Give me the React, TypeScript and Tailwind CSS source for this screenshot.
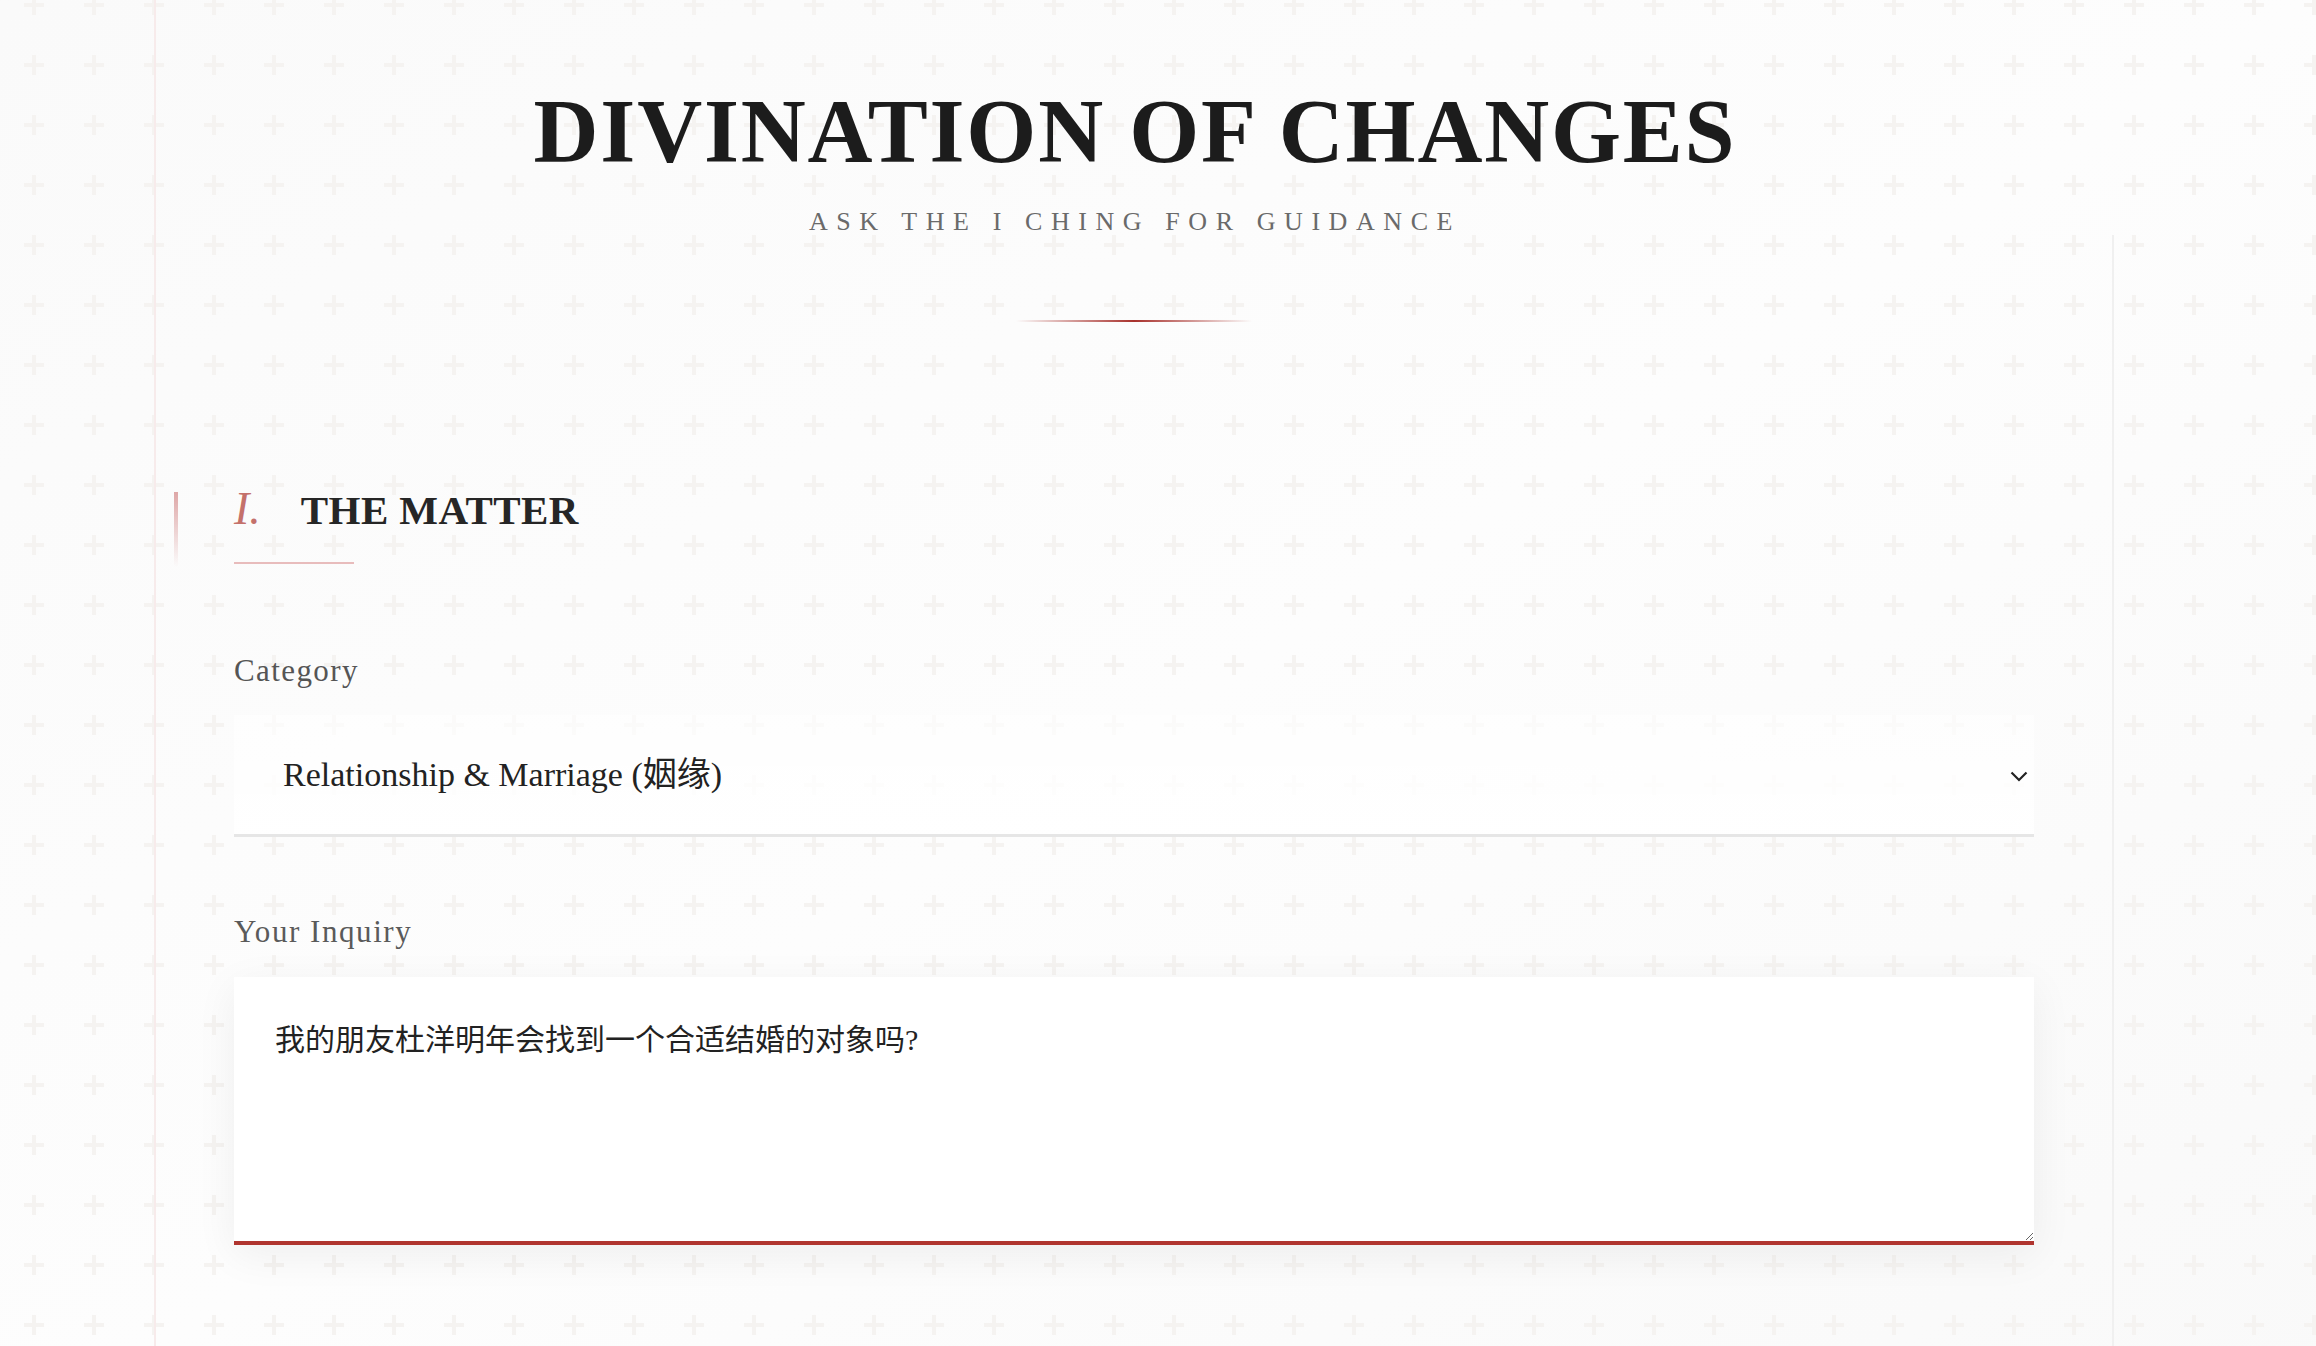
import { ChangeEvent, useState } from "react";

const serif = "font-['Liberation_Serif','Noto_Sans_CJK_SC',serif]";

// light plus-sign grid behind everything
function CrossPattern() {
  return (
    <svg className="pointer-events-none absolute inset-0 h-full w-full" aria-hidden="true">
      <defs>
        <pattern id="cross" x="4" y="-25" width="60" height="60" patternUnits="userSpaceOnUse">
          <rect x="20" y="28" width="20" height="4" fill="#f5f3f1" />
          <rect x="28" y="20" width="4" height="20" fill="#f5f3f1" />
        </pattern>
      </defs>
      <rect width="100%" height="100%" fill="url(#cross)" />
    </svg>
  );
}

const categories = [
  "Relationship & Marriage (姻缘)",
  "Career & Work (事业)",
  "Wealth & Fortune (财运)",
  "Health (健康)",
  "Study & Exams (学业)",
];

export default function App() {
  const [category, setCategory] = useState(categories[0]);
  const [inquiry, setInquiry] = useState("我的朋友杜洋明年会找到一个合适结婚的对象吗?");

  return (
    <div className={`relative min-h-screen overflow-hidden bg-gradient-to-br from-[#fafafa] via-[#fdfdfd] to-[#f9f9f9] ${serif}`}>
      <CrossPattern />

      <div className="relative ml-[154px] w-[1960px] min-h-screen border-l-2 border-[#f7ebeb]">
        {/* header */}
        <header className="flex flex-col items-center pt-[87px]">
          <h1 className="text-[90px] font-bold leading-none tracking-[0.02em] text-[#1c1c1c]">
            DIVINATION OF CHANGES
          </h1>
          <p className="mt-[32px] text-[26px] leading-none tracking-[0.33em] text-[#6a6a6a]">
            ASK THE I CHING FOR GUIDANCE
          </p>
        </header>

        {/* card */}
        <section className="border-r-2 border-[#f0f0f0] pb-[200px] pl-[78px] pr-[78px] pt-[85px]">
          <div className="mx-auto h-[2px] w-[236px] bg-gradient-to-r from-transparent via-[#a8312c] to-transparent" />

          <div className="-ml-[60px] mt-[164px] flex items-start">
            <div className="mt-[6px] h-[75px] w-[4px] bg-gradient-to-b from-[#dea7a7] to-transparent" />
            <div className="ml-[56px] flex flex-col">
              <div className="flex items-baseline">
                <span className="text-[46px] italic leading-none text-[#c4716b]">I.</span>
                <h2 className="ml-[40px] text-[41px] font-bold leading-none tracking-[0.01em] text-[#262626]">
                  THE MATTER
                </h2>
              </div>
              <div className="mt-[30px] h-[2px] w-[120px] bg-[#e8bcbc]" />
            </div>
          </div>

          <label className="mt-[88px] block text-[31px] leading-none tracking-[0.045em] text-[#555]">
            Category
          </label>
          <div className="relative mt-[29px]">
            <select
              value={category}
              onChange={(e: ChangeEvent<HTMLSelectElement>) => setCategory(e.target.value)}
              className={`block h-[122px] w-full appearance-none border-0 border-b-[3px] border-[#e6e6e6] bg-gradient-to-b from-white/60 to-white/95 pl-[49px] pr-[60px] text-[34px] text-[#222] outline-none ${serif}`}
            >
              {categories.map(c => (
                <option key={c} value={c}>
                  {c}
                </option>
              ))}
            </select>
            <svg
              className="pointer-events-none absolute right-[6px] top-[56px]"
              width="18"
              height="11"
              viewBox="0 0 18 11"
              fill="none"
            >
              <polyline points="1.5,1.5 9,9 16.5,1.5" stroke="#222" strokeWidth="2.2" />
            </svg>
          </div>

          <label className="mt-[79px] block text-[31px] leading-none tracking-[0.05em] text-[#5a5a5a]">
            Your Inquiry
          </label>
          <textarea
            value={inquiry}
            onChange={(e: ChangeEvent<HTMLTextAreaElement>) => setInquiry(e.target.value)}
            className={`mt-[30px] block h-[268px] w-full border-0 border-b-4 border-[#b0352f] bg-white px-[41px] pt-[39px] text-[30px] leading-[1.6] text-[#222] shadow-[0_10px_40px_rgba(0,0,0,0.06)] outline-none ${serif}`}
          />
        </section>
      </div>
    </div>
  );
}
